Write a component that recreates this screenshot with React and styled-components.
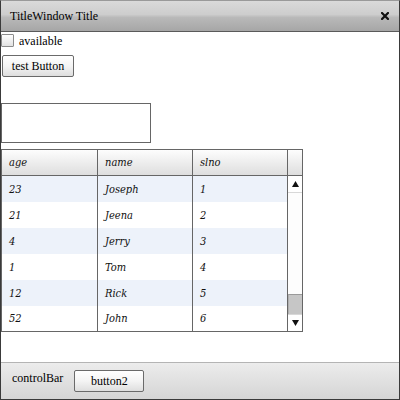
import React from 'react';
import styled, { createGlobalStyle } from 'styled-components';

const Global = createGlobalStyle`
  html, body { margin: 0; padding: 0; background: #fff; }
  body { font-family: "Liberation Serif", "Times New Roman", serif; font-size: 12px; color: #000; }
  * { box-sizing: border-box; }
`;

const Window = styled.div`
  width: 400px;
  height: 400px;
  border: 1px solid #3a3a3a;
  border-top-color: #9a9a9a;
  display: flex;
  flex-direction: column;
  background: #fff;
`;

const TitleBar = styled.div`
  height: 31px;
  flex: none;
  border-bottom: 1px solid #5a5a5a;
  background: linear-gradient(to bottom, #dadada 0%, #cdcdcd 45%, #b9b9b9 55%, #a6a6a6 100%);
  display: flex;
  align-items: center;
  justify-content: space-between;
  padding: 0 10px 0 9px;
  font-size: 12px;
`;

const CloseIcon = styled.svg`
  width: 8px;
  height: 8px;
  display: block;
`;

const Content = styled.div`
  flex: 1;
  display: flex;
  flex-direction: column;
  align-items: flex-start;
  padding-top: 2px;
`;

const CheckRow = styled.label`
  display: flex;
  align-items: center;
  height: 13px;
`;

const CheckBox = styled.span`
  width: 13px;
  height: 13px;
  border: 1px solid #8c8c8c;
  border-radius: 1px;
  background: linear-gradient(to bottom, #ffffff, #e2e2e2);
`;

const CheckLabel = styled.span`
  margin-left: 5px;
  line-height: 13px;
  padding-top: 1px;
`;

const Button = styled.button`
  font-family: "Liberation Serif", "Times New Roman", serif;
  font-size: 12px;
  color: #000;
  height: 22px;
  width: ${p => p.$w}px;
  margin-top: ${p => p.$mt || 0}px;
  margin-left: ${p => p.$ml || 0}px;
  border: 1px solid #6a6a6a;
  border-radius: 2px;
  background: linear-gradient(to bottom, #ffffff 0%, #f4f4f4 50%, #dedede 100%);
  padding: 0;
  flex: none;
`;

const TextInput = styled.div`
  margin-top: 26px;
  width: 150px;
  height: 40px;
  border: 1px solid #666;
  background: #fff;
`;

const Grid = styled.div`
  margin-top: 6px;
  width: 302px;
  height: 183px;
  border: 1px solid #666;
  display: grid;
  grid-template-columns: 96px 95px 95px 14px;
  grid-template-rows: 26px 155px;
  font-family: "DejaVu Serif Condensed", "DejaVu Serif", serif;
  font-style: italic;
  font-size: 11px;
  color: #111;
`;

const HeadCell = styled.div`
  background: linear-gradient(to bottom, #fdfdfd, #dedede);
  border-bottom: 1px solid #666;
  border-right: ${p => (p.$last ? 'none' : '1px solid #666')};
  display: flex;
  align-items: center;
  padding-left: 7px;
`;

const Column = styled.div`
  border-right: 1px solid #666;
  display: flex;
  flex-direction: column;
  overflow: hidden;
`;

const Cell = styled.div`
  height: ${p => (p.$h || 26)}px;
  flex: none;
  display: flex;
  align-items: center;
  padding-left: 7px;
  background: ${p => (p.$alt ? '#edf2fa' : '#fff')};
`;

const ScrollBar = styled.div`
  display: flex;
  flex-direction: column;
  background: #fafafa;
`;

const Arrow = styled.div`
  height: 17px;
  display: flex;
  align-items: center;
  justify-content: center;
  background: #fff;
  border-bottom: ${p => (p.$up ? '1px solid #d8d8d8' : 'none')};
  border-top: ${p => (p.$up ? 'none' : '1px solid #d8d8d8')};
`;

const Track = styled.div`
  flex: 1;
  display: flex;
  flex-direction: column;
  justify-content: flex-end;
  background: #fdfdfd;
`;

const Thumb = styled.div`
  height: 20px;
  background: #c6c6c6;
  border-top: 1px solid #9a9a9a;
  border-left: 1px solid #b0b0b0;
`;

const ControlBar = styled.div`
  flex: none;
  height: 37px;
  border-top: 1px solid #b4b4b4;
  background: linear-gradient(to bottom, #ececec, #d5d5d5);
  display: flex;
  align-items: flex-start;
  padding: 7px 0 0 11px;
`;

const BarLabel = styled.span`
  line-height: 14px;
  padding-top: 1px;
`;

const rows = [
  ['23', 'Joseph', '1'],
  ['21', 'Jeena', '2'],
  ['4', 'Jerry', '3'],
  ['1', 'Tom', '4'],
  ['12', 'Rick', '5'],
  ['52', 'John', '6'],
];

const Tri = ({ up }) => (
  <svg width="7" height="6" viewBox="0 0 7 6">
    {up ? <polygon points="3.5,0 7,6 0,6" fill="#111" /> : <polygon points="0,0 7,0 3.5,6" fill="#111" />}
  </svg>
);

export default function App() {
  return (
    <>
      <Global />
      <Window>
        <TitleBar>
          <span>TitleWindow Title</span>
          <CloseIcon viewBox="0 0 8 8">
            <path d="M1 1 L7 7 M7 1 L1 7" stroke="#111" strokeWidth="2.2" strokeLinecap="square" />
          </CloseIcon>
        </TitleBar>
        <Content>
          <CheckRow>
            <CheckBox />
            <CheckLabel>available</CheckLabel>
          </CheckRow>
          <Button $w={72} $mt={8} $ml={1}>test Button</Button>
          <TextInput />
          <Grid>
            <HeadCell>age</HeadCell>
            <HeadCell>name</HeadCell>
            <HeadCell>slno</HeadCell>
            <HeadCell $last />
            {[0, 1, 2].map(c => (
              <Column key={c}>
                {rows.map((r, i) => (
                  <Cell key={i} $alt={i % 2 === 0} $h={i === 5 ? 25 : 26}>{r[c]}</Cell>
                ))}
              </Column>
            ))}
            <ScrollBar>
              <Arrow $up><Tri up /></Arrow>
              <Track><Thumb /></Track>
              <Arrow><Tri /></Arrow>
            </ScrollBar>
          </Grid>
        </Content>
        <ControlBar>
          <BarLabel>controlBar</BarLabel>
          <Button $w={70} $ml={11}>button2</Button>
        </ControlBar>
      </Window>
    </>
  );
}
